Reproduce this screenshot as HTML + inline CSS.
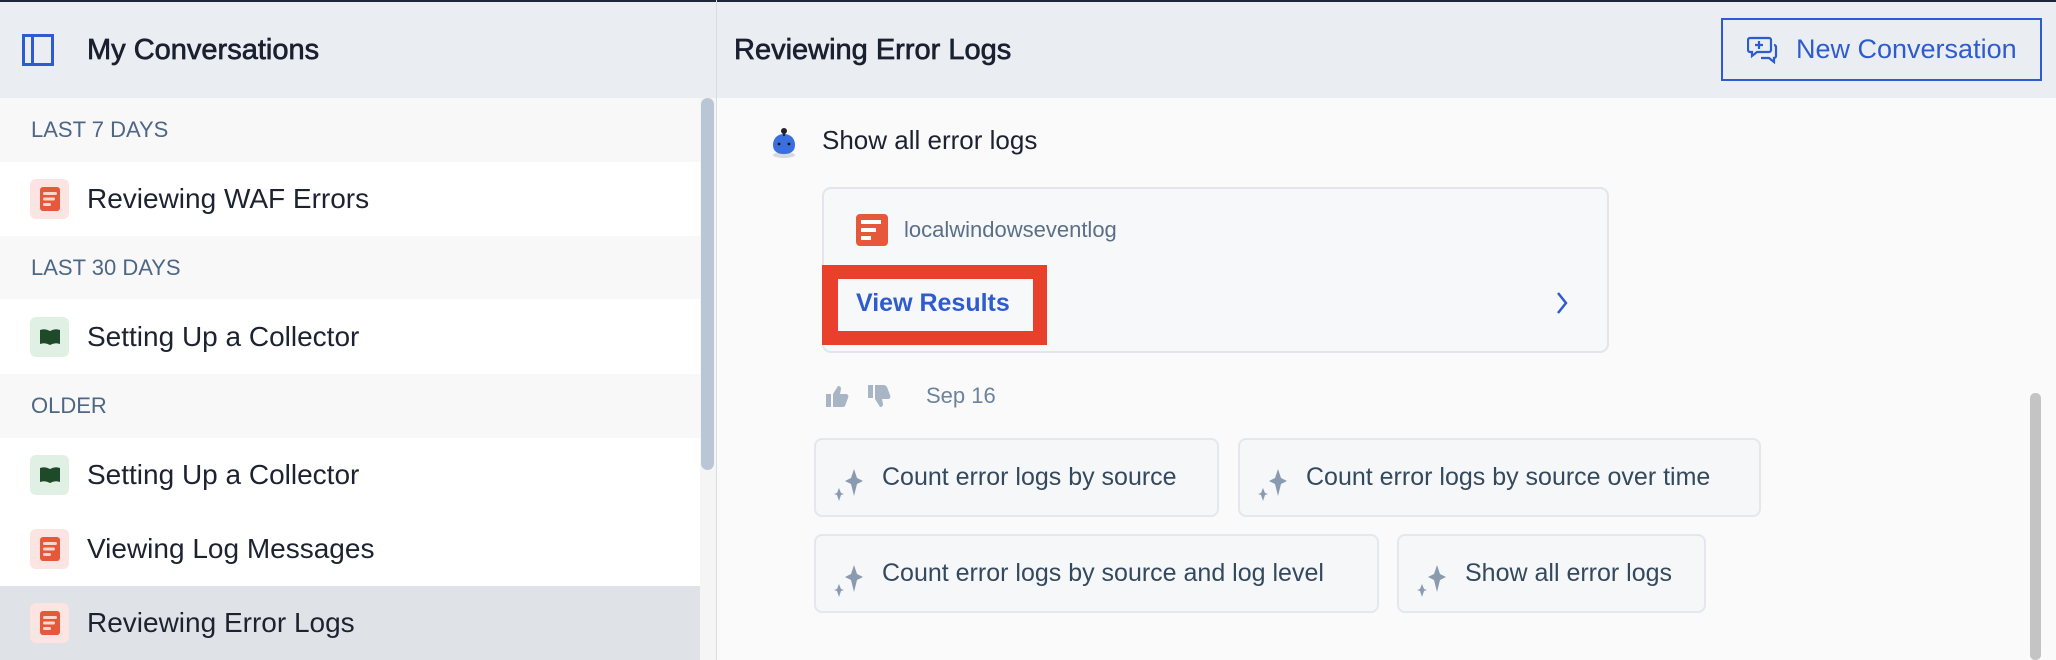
<!DOCTYPE html>
<html><head><meta charset="utf-8"><style>
*{margin:0;padding:0;box-sizing:border-box}
body{width:2056px;height:660px;overflow:hidden;font-family:"Liberation Sans",sans-serif;background:#fafafa;position:relative}
.abs{position:absolute}
.topline{left:0;top:0;width:2056px;height:2px;background:#1f2637}
.hdr{top:2px;height:96px;background:#eaedf2}
.sec{left:0;width:700px;background:#f8f8f8;color:#4d6785;font-size:22px;padding-left:31px;display:flex;align-items:center}
.row{left:0;width:700px;background:#fff;display:flex;align-items:center;padding-left:30px;font-size:28px;color:#1c2230}
.row .ic{width:39px;height:40px;border-radius:6px;margin-right:18px;display:flex;align-items:center;justify-content:center}
.red{background:#fbe4e1}.grn{background:#e1f0e4}
.chip{height:79px;background:#f5f7f9;border:2px solid #e4e7eb;border-radius:8px;display:flex;align-items:center;padding-left:18px;font-size:25px;color:#34495e}
.chip svg{margin-right:12px;margin-top:14px}
.ttl{font-size:29px;color:#1a2030;-webkit-text-stroke:0.7px #1a2030}
</style></head><body>
<div class="abs topline"></div>
<div class="abs hdr" style="left:0;width:716px"></div>
<div class="abs hdr" style="left:717px;width:1339px"></div>
<div class="abs" style="left:716px;top:0;width:1px;height:660px;background:#d9dde3"></div>
<svg class="abs" style="left:22px;top:34px" width="32" height="32"><rect x="1.5" y="1.5" width="29" height="29" fill="none" stroke="#2f5bd0" stroke-width="3"/><rect x="9" y="2" width="3" height="28" fill="#2f5bd0"/></svg>
<div class="abs ttl" style="left:87px;top:34px">My Conversations</div>
<div class="abs ttl" style="left:734px;top:34px">Reviewing Error Logs</div>
<div class="abs" style="left:1721px;top:18px;width:321px;height:63px;border:2px solid #2f5bd0;display:flex;align-items:center;padding-left:24px;color:#2f5bd0;font-size:27px">
<svg width="32" height="28" viewBox="0 0 32 28" style="margin-right:17px"><path d="M3 2h19a2 2 0 0 1 2 2v10a2 2 0 0 1-2 2H10l-5 4v-4H3a2 2 0 0 1-2-2V4a2 2 0 0 1 2-2z" fill="none" stroke="#2f5bd0" stroke-width="2.2"/><path d="M12 5v8M8 9h8" stroke="#2f5bd0" stroke-width="2.2"/><path d="M27 9a2 2 0 0 1 2 2v9a2 2 0 0 1-2 2v4l-5-4H14" fill="none" stroke="#2f5bd0" stroke-width="2.2"/></svg>New Conversation</div>

<div class="abs sec" style="top:98px;height:64px">LAST 7 DAYS</div>
<div class="abs row" style="top:162px;height:74px"><div class="ic red"><svg width="20" height="24"><rect width="20" height="24" rx="3" fill="#e5583a"/><rect x="3" y="5" width="14" height="3" rx="1.5" fill="#fbd6cf"/><rect x="3" y="10.5" width="12" height="3" rx="1.5" fill="#fbd6cf"/><rect x="3" y="16" width="8" height="3" rx="1.5" fill="#fbd6cf"/></svg></div>Reviewing WAF Errors</div>
<div class="abs sec" style="top:236px;height:63px">LAST 30 DAYS</div>
<div class="abs row" style="top:299px;height:75px"><div class="ic grn"><svg width="22" height="18"><path d="M1 2q5-2 10 1v14q-5-3-10-1z M21 2q-5-2-10 1v14q5-3 10-1z" fill="#1f4a2a"/></svg></div>Setting Up a Collector</div>
<div class="abs sec" style="top:374px;height:64px">OLDER</div>
<div class="abs row" style="top:438px;height:74px"><div class="ic grn"><svg width="22" height="18"><path d="M1 2q5-2 10 1v14q-5-3-10-1z M21 2q-5-2-10 1v14q5-3 10-1z" fill="#1f4a2a"/></svg></div>Setting Up a Collector</div>
<div class="abs row" style="top:512px;height:74px"><div class="ic red"><svg width="20" height="24"><rect width="20" height="24" rx="3" fill="#e5583a"/><rect x="3" y="5" width="14" height="3" rx="1.5" fill="#fbd6cf"/><rect x="3" y="10.5" width="12" height="3" rx="1.5" fill="#fbd6cf"/><rect x="3" y="16" width="8" height="3" rx="1.5" fill="#fbd6cf"/></svg></div>Viewing Log Messages</div>
<div class="abs row" style="top:586px;height:74px;background:#dfe2e7"><div class="ic red"><svg width="20" height="24"><rect width="20" height="24" rx="3" fill="#e5583a"/><rect x="3" y="5" width="14" height="3" rx="1.5" fill="#fbd6cf"/><rect x="3" y="10.5" width="12" height="3" rx="1.5" fill="#fbd6cf"/><rect x="3" y="16" width="8" height="3" rx="1.5" fill="#fbd6cf"/></svg></div>Reviewing Error Logs</div>
<div class="abs" style="left:700px;top:98px;width:16px;height:562px;background:#f5f5f5"></div>
<div class="abs" style="left:701px;top:98px;width:13px;height:372px;border-radius:7px;background:#b9c6d6"></div>
<div class="abs" style="left:2030px;top:393px;width:11px;height:267px;border-radius:5px;background:#c4c4c4"></div>

<svg class="abs" style="left:766px;top:126px" width="36" height="34"><ellipse cx="18" cy="29" rx="11" ry="3" fill="#d5d9e0"/><path d="M18 8c-7 0-11 5-11 11s4 9 11 9 11-3 11-9-4-11-11-11z" fill="#3a6fe0"/><circle cx="18" cy="5" r="3" fill="#222"/><rect x="17" y="6" width="2" height="4" fill="#222"/><circle cx="13" cy="18" r="1.4" fill="#111"/><circle cx="23" cy="18" r="1.4" fill="#111"/></svg>
<div class="abs" style="left:822px;top:125px;font-size:26px;color:#1c2230">Show all error logs</div>

<div class="abs" style="left:822px;top:187px;width:787px;height:166px;border:2px solid #e2e5e9;border-radius:9px;background:#f7f8fa"></div>
<svg class="abs" style="left:856px;top:214px" width="32" height="32"><rect width="32" height="32" rx="4" fill="#e5583a"/><rect x="5" y="6" width="20" height="4" fill="#fff"/><rect x="5" y="14" width="15" height="4" fill="#fff"/><rect x="5" y="22" width="10" height="4" fill="#fff"/></svg>
<div class="abs" style="left:904px;top:217px;font-size:22px;color:#5a6f88">localwindowseventlog</div>
<div class="abs" style="left:822px;top:265px;width:225px;height:80px;background:#e8402a"></div>
<div class="abs" style="left:838px;top:279px;width:195px;height:52px;background:#f7f8fa"></div>
<div class="abs" style="left:856px;top:289px;font-size:25px;font-weight:bold;color:#2f5bd0">View Results</div>
<svg class="abs" style="left:1555px;top:290px" width="14" height="26"><path d="M3 3l8 10-8 10" fill="none" stroke="#2f5bd0" stroke-width="2.5"/></svg>
<svg class="abs" style="left:825px;top:383px" width="80" height="26"><path d="M1 11h5v13H1z M8 11l5-8c2 0 3 1 3 3l-1 5h6c2 0 3 2 2 4l-3 8c-1 1-2 1-3 1H8z" fill="#a8b5c4"/><g transform="translate(42,0)"><path d="M1 2h5v13H1z M8 2v14l5 8c2 0 3-1 3-3l-1-5h6c2 0 3-2 2-4l-3-8c-1-1-2-2-3-2z" fill="#a8b5c4"/></g></svg>
<div class="abs" style="left:926px;top:383px;font-size:22px;color:#6c839c">Sep 16</div>

<div class="abs chip" style="left:814px;top:438px;width:405px">
<svg width="36" height="32"><path d="M20 0l3 9 6 3-6 3-3 12-3-12-6-3 6-3z" fill="#8a9bb0"/><path d="M5 19l2 5 3 1-3 1-2 6-2-6-3-1 3-1z" fill="#8a9bb0"/></svg>Count error logs by source</div>
<div class="abs chip" style="left:1238px;top:438px;width:523px">
<svg width="36" height="32"><path d="M20 0l3 9 6 3-6 3-3 12-3-12-6-3 6-3z" fill="#8a9bb0"/><path d="M5 19l2 5 3 1-3 1-2 6-2-6-3-1 3-1z" fill="#8a9bb0"/></svg>Count error logs by source over time</div>
<div class="abs chip" style="left:814px;top:534px;width:565px">
<svg width="36" height="32"><path d="M20 0l3 9 6 3-6 3-3 12-3-12-6-3 6-3z" fill="#8a9bb0"/><path d="M5 19l2 5 3 1-3 1-2 6-2-6-3-1 3-1z" fill="#8a9bb0"/></svg>Count error logs by source and log level</div>
<div class="abs chip" style="left:1397px;top:534px;width:309px">
<svg width="36" height="32"><path d="M20 0l3 9 6 3-6 3-3 12-3-12-6-3 6-3z" fill="#8a9bb0"/><path d="M5 19l2 5 3 1-3 1-2 6-2-6-3-1 3-1z" fill="#8a9bb0"/></svg>Show all error logs</div>
</body></html>
